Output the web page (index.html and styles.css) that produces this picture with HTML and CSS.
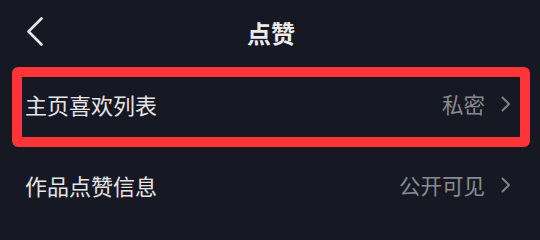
FILE: index.html
```html
<!DOCTYPE html>
<html lang="zh">
<head>
<meta charset="utf-8">
<link rel="stylesheet" href="styles.css">
</head>
<body>
<div class="page">
  <header class="header">
    <svg class="back" width="18" height="29" viewBox="0 0 18 29"><path d="M15.5 1.5 L2.5 14.5 L15.5 27.5" fill="none" stroke="#e8e8ea" stroke-width="2.6" stroke-linecap="round" stroke-linejoin="round"/></svg>
    <h1 class="title">点赞</h1>
  </header>
  <div class="highlight">
    <div class="row row-first">
      <span class="label">主页喜欢列表</span>
      <span class="value">私密<svg class="chev" width="10" height="16" viewBox="0 0 10 16"><path d="M1.5 1.5 L8 8 L1.5 14.5" fill="none" stroke="#808187" stroke-width="2" stroke-linecap="round" stroke-linejoin="round"/></svg></span>
    </div>
  </div>
  <div class="row row-second">
    <span class="label">作品点赞信息</span>
    <span class="value">公开可见<svg class="chev" width="10" height="16" viewBox="0 0 10 16"><path d="M1.5 1.5 L8 8 L1.5 14.5" fill="none" stroke="#808187" stroke-width="2" stroke-linecap="round" stroke-linejoin="round"/></svg></span>
  </div>
</div>
</body>
</html>
```
FILE: styles.css
```css
html, body {
  margin: 0;
  padding: 0;
  background: #161823;
}
.page {
  width: 540px;
  height: 240px;
  font-family: "Noto Sans CJK SC", "Noto Sans", sans-serif;
  overflow: hidden;
}
.header {
  height: 67px;
  display: flex;
  align-items: center;
  justify-content: center;
  position: relative;
}
.back {
  position: absolute;
  left: 26px;
  top: 17px;
}
.title {
  margin: 0;
  font-size: 24px;
  font-weight: 700;
  color: #ececee;
  line-height: 1;
  padding-left: 2px;
  padding-bottom: 2px;
}
.highlight {
  margin: 0 10px 0 12px;
  border: 10px solid #fe3436;
  border-radius: 6px;
}
.row {
  display: flex;
  align-items: center;
  justify-content: space-between;
}
.row-first {
  height: 54px;
  padding: 0 9px 6px 3px;
}
.row-second {
  height: 76px;
  padding: 0 29px 0 25px;
}
.label {
  font-size: 22px;
  color: #e6e6e8;
  line-height: 1;
}
.value {
  display: flex;
  align-items: center;
  font-size: 21.5px;
  color: #8a8b91;
  line-height: 1;
}
.chev {
  margin-left: 16px;
}
```
